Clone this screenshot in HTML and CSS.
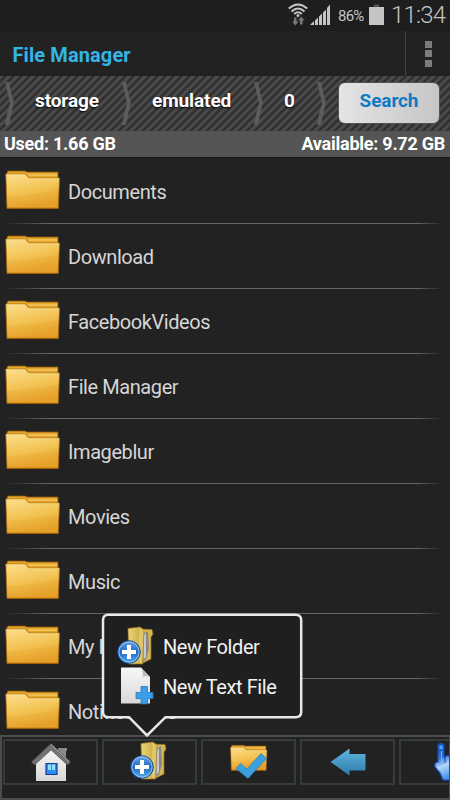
FILE: index.html
```html
<!DOCTYPE html>
<html lang="en">
<head>
    <meta charset="utf-8">
    <title>File Manager</title>
    <link rel="stylesheet" href="styles.css">
</head>
<body>
    <!-- shared icons -->
    <svg class="defs" width="0" height="0">
        <defs>
            <linearGradient id="gold" x1="0" y1="0" x2="0.3" y2="1">
                <stop offset="0" stop-color="#fbdf90"/>
                <stop offset="0.55" stop-color="#f3c454"/>
                <stop offset="1" stop-color="#e6a22c"/>
            </linearGradient>
            <linearGradient id="khaki" x1="0" y1="0" x2="1" y2="0">
                <stop offset="0" stop-color="#e8d477"/>
                <stop offset="1" stop-color="#c9a53c"/>
            </linearGradient>
            <linearGradient id="blue" x1="0" y1="0" x2="0" y2="1">
                <stop offset="0" stop-color="#6aa9e6"/>
                <stop offset="0.5" stop-color="#2468c4"/>
                <stop offset="1" stop-color="#4fb2f4"/>
            </linearGradient>
            <linearGradient id="arrow" x1="0" y1="0" x2="0" y2="1">
                <stop offset="0" stop-color="#62b5e2"/>
                <stop offset="1" stop-color="#2b7ca8"/>
            </linearGradient>
            <linearGradient id="hand" x1="0" y1="0" x2="0.3" y2="1">
                <stop offset="0" stop-color="#1450c0"/>
                <stop offset="0.4" stop-color="#2a6fd8"/>
                <stop offset="0.65" stop-color="#b5d6f8"/>
                <stop offset="1" stop-color="#3d93ee"/>
            </linearGradient>
            <linearGradient id="paper" x1="0" y1="0" x2="0" y2="1">
                <stop offset="0" stop-color="#f8f8f8"/>
                <stop offset="1" stop-color="#d8d8d8"/>
            </linearGradient>
            <symbol id="folder" viewBox="0 0 56 42">
                <path d="M2 3.5 L3 2 H20 L22 3 H53 V12 H2z" fill="#e5a62b" stroke="#8a5708" stroke-width="0.8"/>
                <path d="M23 5 H52 V7 H24z" fill="#efbd50"/>
                <path d="M0.8 5 H20.5 L23.5 9 H54.5 L53.2 39.5 H2z" fill="url(#gold)" stroke="#a86d10" stroke-width="0.8"/>
                <path d="M1.5 5.8 H20 L23 9.8 H53.8" fill="none" stroke="#f9dc8c" stroke-width="0.8"/>
                <path d="M2.2 27 Q28 26 53.5 21 L53 39 H2.5z" fill="#e69a1c" opacity="0.16"/>
                <path d="M2 39.4 H53.2" stroke="#a35f05" stroke-width="1.2"/>
            </symbol>
            <symbol id="new-folder" viewBox="0 0 38 40">
                <path d="M24 3 L35 3.5 L36 8 L34 11 V33 L26 37z" fill="#d9b750" stroke="#8e7020" stroke-width="0.7"/>
                <path d="M26 8 L31 5 L32 23 L29 34 L26 35z" fill="#87878a"/>
                <path d="M26.5 10 L29 7 V31 L26.5 34z" fill="#c9c9cc"/>
                <path d="M11 2.5 L23 1 L27 4 L25.5 38 L12 38z" fill="url(#khaki)" stroke="#9c7d26" stroke-width="0.7"/>
                <path d="M22.5 2 L26.5 4 L25.2 37.5 L22 36z" fill="#f0df8d" opacity="0.55"/>
                <circle cx="12" cy="26" r="11.3" fill="url(#blue)" stroke="#164b9c" stroke-width="1"/>
                <circle cx="12" cy="26" r="10.1" fill="none" stroke="#9fcbf5" stroke-width="0.9"/>
                <path d="M12 19 V33 M5 26 H19" stroke="#fff" stroke-width="4"/>
            </symbol>
            <symbol id="chevron" viewBox="0 0 10 45">
                <path d="M0 1 H4 Q6 13 9 21.5 Q6 33 4 44 H0 Q2 32 5 22 Q3 13 0 1z"/>
            </symbol>
        </defs>
    </svg>

    <div class="status-bar">
        <svg class="wifi" width="20" height="23" viewBox="0 0 20 23">
            <g fill="none" stroke="#c4c4c4" stroke-width="2">
                <path d="M0.8 5.5 Q10 -2.5 19.2 5.5"/>
                <path d="M3.5 8.5 Q10 2.5 16.5 8.5"/>
                <path d="M6.2 11 Q10 7.5 13.8 11"/>
            </g>
            <circle cx="10" cy="12.6" r="1.5" fill="#c4c4c4"/>
            <path d="M6 14.5 h2.5 v4 h2 l-3.2 4 l-3.2 -4 h1.9z M12 21.5 h2.5 v-4 h2 l-3.2 -4 l-3.2 4 h1.9z" fill="#777"/>
        </svg>
        <svg class="signal" width="21" height="21" viewBox="0 0 21 21">
            <path d="M0 21 L4 17 V21z M5 16.5 L8 13.5 V21 H5z M9 12.5 L12 9.5 V21 H9z M13 8.5 L16 5.5 V21 H13z M17 4 L20 0.5 V21 H17z" fill="#c4c4c4"/>
        </svg>
        <span class="percent">86%</span>
        <svg class="battery" width="15" height="21" viewBox="0 0 15 21">
            <path d="M5 0.5 H10 V3 H5z" fill="#555"/>
            <path d="M0 3 H15 V21 H0z" fill="#c4c4c4"/>
        </svg>
        <span class="clock">11:34</span>
    </div>

    <div class="action-bar">
        <h1>File Manager</h1>
        <div class="overflow"><i></i><i></i><i></i></div>
    </div>

    <div class="path-bar">
        <svg class="chevron" width="10" height="45"><use href="#chevron"/></svg>
        <span class="crumb storage">storage</span>
        <svg class="chevron" width="10" height="45"><use href="#chevron"/></svg>
        <span class="crumb emulated">emulated</span>
        <svg class="chevron" width="10" height="45"><use href="#chevron"/></svg>
        <span class="crumb zero">0</span>
        <svg class="chevron" width="10" height="45"><use href="#chevron"/></svg>
        <button class="search">Search</button>
    </div>

    <div class="storage-bar">
        <span class="used">Used: 1.66 GB</span>
        <span class="available">Available: 9.72 GB</span>
    </div>

    <ul class="files">
        <li><svg><use href="#folder"/></svg><span>Documents</span></li>
        <li><svg><use href="#folder"/></svg><span>Download</span></li>
        <li><svg><use href="#folder"/></svg><span>FacebookVideos</span></li>
        <li><svg><use href="#folder"/></svg><span>File Manager</span></li>
        <li><svg><use href="#folder"/></svg><span>Imageblur</span></li>
        <li><svg><use href="#folder"/></svg><span>Movies</span></li>
        <li><svg><use href="#folder"/></svg><span>Music</span></li>
        <li><svg><use href="#folder"/></svg><span>My Files</span></li>
        <li><svg><use href="#folder"/></svg><span>Notifications</span></li>
    </ul>

    <div class="toolbar">
        <div class="tool">
            <svg width="40" height="39" viewBox="0 0 40 39">
                <path d="M27 5 H36 V8 H35 V18 H28z" fill="#8b8b8b"/>
                <path d="M5 18 L20 4 L35 18 V38 H5z" fill="url(#paper)"/>
                <path d="M20 0.5 L39.5 19 L36.5 22 L20 7 L3.5 22 L0.5 19z" fill="#727272" stroke="#4f4f4f" stroke-width="0.6"/>
                <path d="M20 1.5 L38 18.5" stroke="#a5a5a5" stroke-width="1"/>
                <path d="M15 20.5 H26 V31.5 H15z" fill="#2e8df0" stroke="#163f93" stroke-width="1.2"/>
                <path d="M17 21.5 H20 V27 H17z M21 21.5 H24 V27 H21z" fill="#8fe0ff"/>
            </svg>
        </div>
        <div class="tool">
            <svg class="add" width="38" height="40"><use href="#new-folder"/></svg>
        </div>
        <div class="tool">
            <svg width="38" height="36" viewBox="0 0 38 36">
                <svg width="38" height="28" viewBox="0 0 56 42" preserveAspectRatio="none"><use href="#folder" width="56" height="42"/></svg>
                <path d="M6 24.5 L10.5 19.5 L17 25 L31 9.5 L36.5 14.5 L18 34.5z" fill="#3aa1de" stroke="#2683c0" stroke-width="0.7"/>
            </svg>
        </div>
        <div class="tool">
            <svg width="36" height="28" viewBox="0 0 36 28">
                <path d="M0.5 14 L19.5 0.5 V6 H35.5 V22.5 H19.5 V27.5z" fill="url(#arrow)"/>
            </svg>
        </div>
        <div class="tool last">
            <svg width="36" height="40" viewBox="0 0 36 40">
                <path d="M4 3 Q7 0 10 3 V15 H11 Q13 12 16 15 Q19 12 22 16 Q25 13 27 18 V30 L22 38 H9 L6 31 L1 25 Q0 20 4 20z" fill="url(#hand)" stroke="#164bb5" stroke-width="1.2"/>
                <path d="M5.5 3.5 H8.5 V7 H5.5z" fill="#4fa8f5"/>
                <path d="M7.5 9 V20" stroke="#6db4f7"/>
                <path d="M11 14 V21 M16 15 V21 M22 16 V21" stroke="#164bb5"/>
            </svg>
        </div>
    </div>

    <div class="popup">
        <svg class="frame" width="202" height="126" viewBox="0 0 202 126">
            <path d="M7.5 2.7 H194.5 Q200.2 2.7 200.2 8 V100 Q200.2 105.2 194.5 105.2 H64.5 L46 123.5 L28 105.2 H7.5 Q2 105.2 2 100 V8 Q2 2.7 7.5 2.7z"/>
        </svg>
        <div class="option">
            <svg width="38" height="40"><use href="#new-folder"/></svg>
            <span>New Folder</span>
        </div>
        <div class="option">
            <svg width="38" height="40" viewBox="0 0 38 40">
                <path d="M4 1.5 H24 L33 11 V37.5 H4z" fill="url(#paper)"/>
                <path d="M24 1.5 L33 11 Q28 9 25.5 11 Q26.5 6 24 1.5z" fill="#bcbcbc"/>
                <path d="M24 20.5 H30.5 V26.5 H36 V32.5 H30.5 V38 H24 V32.5 H19 V26.5 H24z" fill="#3b9ee8" stroke="#2478c2" stroke-width="0.8"/>
            </svg>
            <span>New Text File</span>
        </div>
    </div>
</body>
</html>
```
FILE: styles.css
```css
* {
    box-sizing: border-box;
}
body {
    width: 450px;
    height: 800px;
    margin: 0;
    overflow: hidden;
    position: relative;
    display: flex;
    flex-direction: column;
    background-color: #222;
    color: #d6d6d6;
    font-family: Roboto, sans-serif;
}
.defs {
    position: absolute;
}
.status-bar {
    height: 31px;
    flex: none;
    display: flex;
    align-items: flex-start;
    justify-content: flex-end;
    padding: 3px 4px 0 0;
    background-color: #1e1e1e;
    color: #c4c4c4;
}
.wifi {
    margin-right: 1px;
}
.signal {
    margin: 1px 0 0 1px;
}
.percent {
    width: 28px;
    margin-left: 7px;
    font-size: 15px;
    line-height: 26px;
    letter-spacing: -0.8px;
}
.battery {
    margin: 1px 7px 0 3px;
}
.clock {
    width: 55px;
    font-size: 24px;
    line-height: 25px;
    font-weight: 300;
    letter-spacing: -0.8px;
}
.action-bar {
    height: 45px;
    flex: none;
    display: flex;
    justify-content: space-between;
}
h1 {
    margin: 0 0 0 12.5px;
    color: #33b5e5;
    font-size: 20px;
    font-weight: 700;
    letter-spacing: 0.1px;
    line-height: 48px;
}
.overflow {
    width: 45px;
    display: flex;
    flex-direction: column;
    align-items: center;
    gap: 2px;
    padding-top: 10px;
    border-left: 1px solid #3a4442;
}
.overflow i {
    width: 7px;
    height: 7px;
    margin-bottom: 0.4px;
    background-color: #7c7c7c;
}
.path-bar {
    height: 55px;
    flex: none;
    display: flex;
    padding: 5px 0 0 5px;
    background: repeating-linear-gradient(135deg, #4b4b4b 0, #4b4b4b 2px, #313131 3px, #313131 5px, #4b4b4b 5.66px);
    color: #fff;
}
.chevron {
    flex: none;
    fill: #5c5c5c;
}
.crumb {
    flex: none;
    font-size: 19px;
    font-weight: 700;
    letter-spacing: -0.1px;
    line-height: 39px;
    text-shadow: 0 1px 2px #000;
}
.storage {
    width: 107px;
    padding-left: 20px;
}
.emulated {
    width: 122px;
    padding-left: 20px;
}
.zero {
    width: 53px;
    padding-left: 20px;
}
.search {
    flex: none;
    width: 102px;
    height: 42px;
    margin: 1px 0 0 11px;
    padding: 0 0 5px;
    border: 1px solid #4a5553;
    border-radius: 7px;
    background: linear-gradient(90deg, #e4e4e4, #c6c6c6);
    color: #1179c4;
    font: 700 19px Roboto, sans-serif;
    letter-spacing: -0.1px;
}
.storage-bar {
    height: 27px;
    flex: none;
    display: flex;
    justify-content: space-between;
    padding: 0 5px 0 4px;
    border-bottom: 1px solid #191519;
    background-color: #555;
    color: #fff;
    font-size: 18px;
    font-weight: 700;
    letter-spacing: -0.25px;
    line-height: 26px;
}
.files {
    flex: 1;
    min-height: 0;
    overflow: hidden;
    margin: 0;
    padding: 1px 0 0;
    list-style: none;
}
.files li {
    height: 65px;
    display: flex;
    padding-left: 5px;
    font-size: 20px;
    letter-spacing: -0.42px;
    line-height: 67px;
    background: linear-gradient(90deg, transparent, #666 10%, #666 94%, transparent) 6px 64px / 437px 1px no-repeat;
}
.files svg {
    width: 56px;
    height: 42px;
    margin: 9.5px 7px 0 0;
}
.toolbar {
    height: 65px;
    flex: none;
    overflow: hidden;
    display: flex;
    gap: 4px;
    padding: 2px 0 0 1px;
    border: 2px solid #4c4c4c;
    border-width: 2px 1px 2px 2px;
}
.tool {
    flex: none;
    width: 95px;
    height: 46px;
    display: flex;
    align-items: center;
    justify-content: center;
    border: 2px solid #353d3b;
}
.tool .add {
    margin: -2px 0 0 -2px;
}
.tool.last {
    width: 50px;
    border-right: 0;
    overflow: hidden;
    justify-content: flex-start;
    padding-left: 33px;
}
.tool.last svg {
    flex: none;
}
.popup {
    position: absolute;
    left: 101px;
    top: 612px;
    width: 202px;
    height: 126px;
    padding: 14px 0 0 16px;
}
.frame {
    position: absolute;
    left: 0;
    top: 0;
    fill: #1f1f1f;
    stroke: #e8e8e8;
    stroke-width: 2.5;
}
.option {
    position: relative;
    height: 40px;
    display: flex;
    gap: 8px;
    color: #f2f2f2;
    font-size: 20px;
    letter-spacing: -0.42px;
    line-height: 43px;
}
```
